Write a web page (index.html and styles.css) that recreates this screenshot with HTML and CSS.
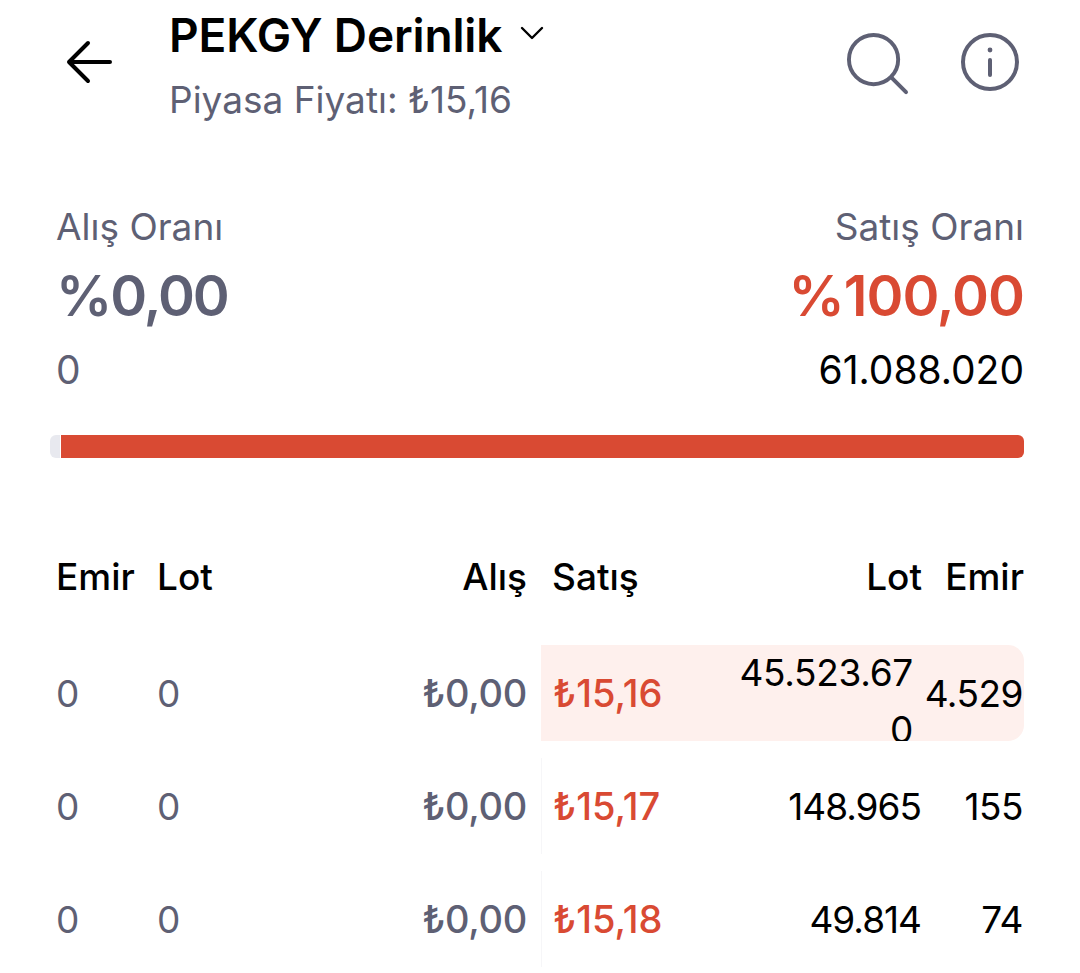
FILE: index.html
```html
<!doctype html>
<html lang="tr">

<head>
    <meta charset="UTF-8">
    <meta name="viewport" content="width=device-width, initial-scale=1.0">
    <title>PEKGY Derinlik</title>
    <link rel="stylesheet" href="styles.css">
</head>

<body>
    <!-- Üst başlık -->
    <header class="top-bar">
        <button class="back-btn" aria-label="Geri">
            <svg width="48" height="44" viewBox="0 0 48 44" fill="none" stroke="#000" stroke-width="4" stroke-linecap="round" stroke-linejoin="round">
                <path d="M44 22H3M22 3L3 22l19 19" />
            </svg>
        </button>
        <div class="title-block">
            <h1 class="title">
                PEKGY Derinlik
                <svg class="chevron" width="24" height="14" viewBox="0 0 24 14" fill="none" stroke="#000" stroke-width="2.4" stroke-linecap="round" stroke-linejoin="round">
                    <path d="M2 2l10 10L22 2" />
                </svg>
            </h1>
            <div class="subtitle">Piyasa Fiyatı: ₺15,16</div>
        </div>
        <div class="top-icons">
            <svg width="63" height="63" viewBox="0 0 64 64" fill="none" stroke="#5e6074" stroke-width="4" stroke-linecap="round">
                <circle cx="28" cy="28" r="25" />
                <path d="M46 46l15 15" />
            </svg>
            <svg width="60" height="60" viewBox="0 0 60 60" fill="none" stroke="#5e6074" stroke-width="4" stroke-linecap="round">
                <circle cx="30" cy="30" r="27" />
                <path d="M30 28v15" />
                <circle cx="30" cy="18" r="2.4" fill="#5e6074" stroke="none" />
            </svg>
        </div>
    </header>

    <!-- Alış / satış oranı -->
    <section class="ratio">
        <div class="ratio-side">
            <div class="ratio-label">Alış Oranı</div>
            <div class="ratio-value buy">%0,00</div>
            <div class="ratio-total">0</div>
        </div>
        <div class="ratio-side right">
            <div class="ratio-label">Satış Oranı</div>
            <div class="ratio-value sell">%100,00</div>
            <div class="ratio-total dark">61.088.020</div>
        </div>
    </section>

    <div class="bar">
        <div class="bar-buy"></div>
        <div class="bar-sell"></div>
    </div>

    <!-- Derinlik tablosu -->
    <section class="depth">
        <div class="depth-head">
            <span>Emir</span>
            <span>Lot</span>
            <span class="num">Alış</span>
            <span class="sell-price">Satış</span>
            <span class="num">Lot</span>
            <span class="num">Emir</span>
        </div>

        <div class="depth-row">
            <span class="muted">0</span>
            <span class="muted">0</span>
            <span class="muted num amount">₺0,00</span>
            <div class="sell-cell active">
                <span class="price">₺15,16</span>
                <span class="lot wrap">45.523.67<br>0</span>
                <span class="orders">4.529</span>
            </div>
        </div>

        <div class="depth-row">
            <span class="muted">0</span>
            <span class="muted">0</span>
            <span class="muted num amount">₺0,00</span>
            <div class="sell-cell">
                <span class="price">₺15,17</span>
                <span class="lot">148.965</span>
                <span class="orders">155</span>
            </div>
        </div>

        <div class="depth-row">
            <span class="muted">0</span>
            <span class="muted">0</span>
            <span class="muted num amount">₺0,00</span>
            <div class="sell-cell">
                <span class="price">₺15,18</span>
                <span class="lot">49.814</span>
                <span class="orders">74</span>
            </div>
        </div>
    </section>
</body>

</html>
```

FILE: styles.css
```css
body {
    margin: 0;
    height: 973px;
    overflow: hidden;
    padding: 0 56px;
    background-color: #ffffff;
    color: #000000;
    font-family: Inter, "Noto Sans", sans-serif;
}

/* Üst başlık */
.top-bar {
    display: flex;
    height: 135px;
}

.back-btn {
    width: 113px;
    padding: 40px 0 0 10px;
    border: none;
    background: none;
    text-align: left;
    align-self: flex-start;
}

.title {
    margin: 10px 0 0;
    font-size: 46px;
    line-height: 50px;
    font-weight: 600;
    letter-spacing: -0.15px;
    display: flex;
    align-items: center;
    gap: 18px;
}

.chevron {
    margin-top: -4px;
}

.subtitle {
    margin-top: 20px;
    font-size: 37px;
    line-height: 40px;
    color: #5e6074;
}

.top-icons {
    margin-left: auto;
    display: flex;
    gap: 51px;
    padding-top: 32px;
    align-items: flex-start;
    margin-right: 4px;
}

/* Oran bölümü */
.ratio {
    display: flex;
    justify-content: space-between;
    padding-top: 72px;
}

.ratio-side.right {
    text-align: right;
}

.ratio-label {
    font-size: 37px;
    line-height: 40px;
    color: #5e6074;
}

.ratio-value {
    margin-top: 15px;
    font-size: 56px;
    line-height: 68px;
    font-weight: 600;
    letter-spacing: -1px;
    color: #5e6074;
}

.ratio-value.buy {
    letter-spacing: -2px;
}

.ratio-value.sell {
    color: #d94a33;
}

.ratio-total {
    margin-top: 18px;
    font-size: 39px;
    line-height: 44px;
    color: #5e6074;
}

.ratio-total.dark {
    color: #000000;
}

.bar {
    display: flex;
    gap: 1px;
    height: 23px;
    margin: 43px 0 0 -6px;
}

.bar-buy {
    width: 10px;
    background-color: #e8e9ef;
    border-radius: 6px 0 0 6px;
}

.bar-sell {
    flex: 1;
    background-color: #d94a33;
    border-radius: 0 6px 6px 0;
}

/* Derinlik tablosu */
.depth {
    padding-top: 97px;
    font-size: 37px;
}

.depth-head,
.depth-row {
    display: grid;
    grid-template-columns: 101px 100px 270px 1fr;
    align-items: center;
}

.depth-head {
    grid-template-columns: 101px 100px 270px 140px 1fr 102px;
    line-height: 44px;
    font-weight: 500;
    margin-bottom: 46px;
}

.sell-price {
    padding-left: 25px;
}

.num {
    text-align: right;
}

.muted {
    color: #5e6074;
}

.amount {
    font-size: 38px;
    font-weight: 500;
    letter-spacing: -0.3px;
}

.depth-row {
    height: 96px;
    margin-bottom: 17px;
}

.sell-cell {
    display: grid;
    grid-template-columns: 1fr auto 103px;
    grid-template-rows: 96px;
    align-items: center;
    height: 96px;
    margin-left: 14px;
    padding-left: 11px;
    border-left: 1px solid #f6f6f8;
    box-sizing: border-box;
    overflow: hidden;
    letter-spacing: -1px;
}

.sell-cell.active {
    background-color: #fef0ed;
    border-left-color: #fef0ed;
    border-radius: 0 16px 16px 0;
}

.price {
    font-size: 38px;
    color: #d94a33;
    font-weight: 500;
    letter-spacing: 0;
}

.lot,
.orders {
    text-align: right;
}

.orders {
    padding-right: 1px;
    letter-spacing: -0.5px;
}

.lot.wrap {
    line-height: 57px;
    padding: 16px 8px 0 0;
    letter-spacing: -0.3px;
}
```
